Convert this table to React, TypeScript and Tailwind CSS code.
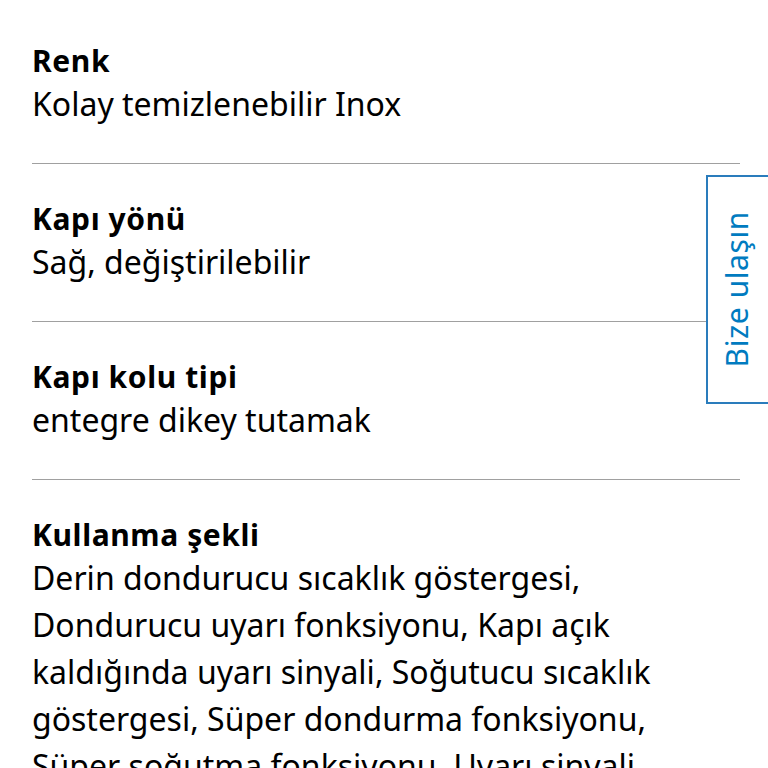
const specs = [
  { label: "Renk", lines: ["Kolay temizlenebilir Inox"] },
  { label: "Kapı yönü", lines: ["Sağ, değiştirilebilir"] },
  { label: "Kapı kolu tipi", lines: ["entegre dikey tutamak"] },
  {
    label: "Kullanma şekli",
    lines: [
      "Derin dondurucu sıcaklık göstergesi,",
      "Dondurucu uyarı fonksiyonu, Kapı açık",
      "kaldığında uyarı sinyali, Soğutucu sıcaklık",
      "göstergesi, Süper dondurma fonksiyonu,",
      "Süper soğutma fonksiyonu, Uyarı sinyali",
      "arızalarda",
    ],
  },
];

export default function App() {
  return (
    <main className="relative h-[768px] overflow-hidden bg-white text-black font-['Noto_Sans',sans-serif]">
      <div className="pl-8 pr-7">
        {specs.map((spec, i) => (
          <section
            key={spec.label}
            className={`${i === 0 ? "pt-[42px]" : "pt-[36px]"} pb-[36px] border-b border-[#a0a0a0]`}
          >
            <h3 className="text-[30px] leading-[38px] font-bold tracking-[0.6px]">{spec.label}</h3>
            <p className="text-[32px] leading-[47px]">
              {spec.lines.map((line, j) => (
                <span key={j} className="block whitespace-nowrap">
                  {line}
                </span>
              ))}
            </p>
          </section>
        ))}
      </div>

      {/* Bize ulaşın tab */}
      <div className="absolute left-[706px] top-[175px] w-[64px] h-[229px] border-2 border-[#2a7cbc] bg-white flex items-center justify-center">
        <span className="[writing-mode:vertical-rl] rotate-180 text-[30px] leading-none tracking-[0.6px] text-[#007bc0] whitespace-nowrap pl-[2px]">
          Bize ulaşın
        </span>
      </div>
    </main>
  );
}
